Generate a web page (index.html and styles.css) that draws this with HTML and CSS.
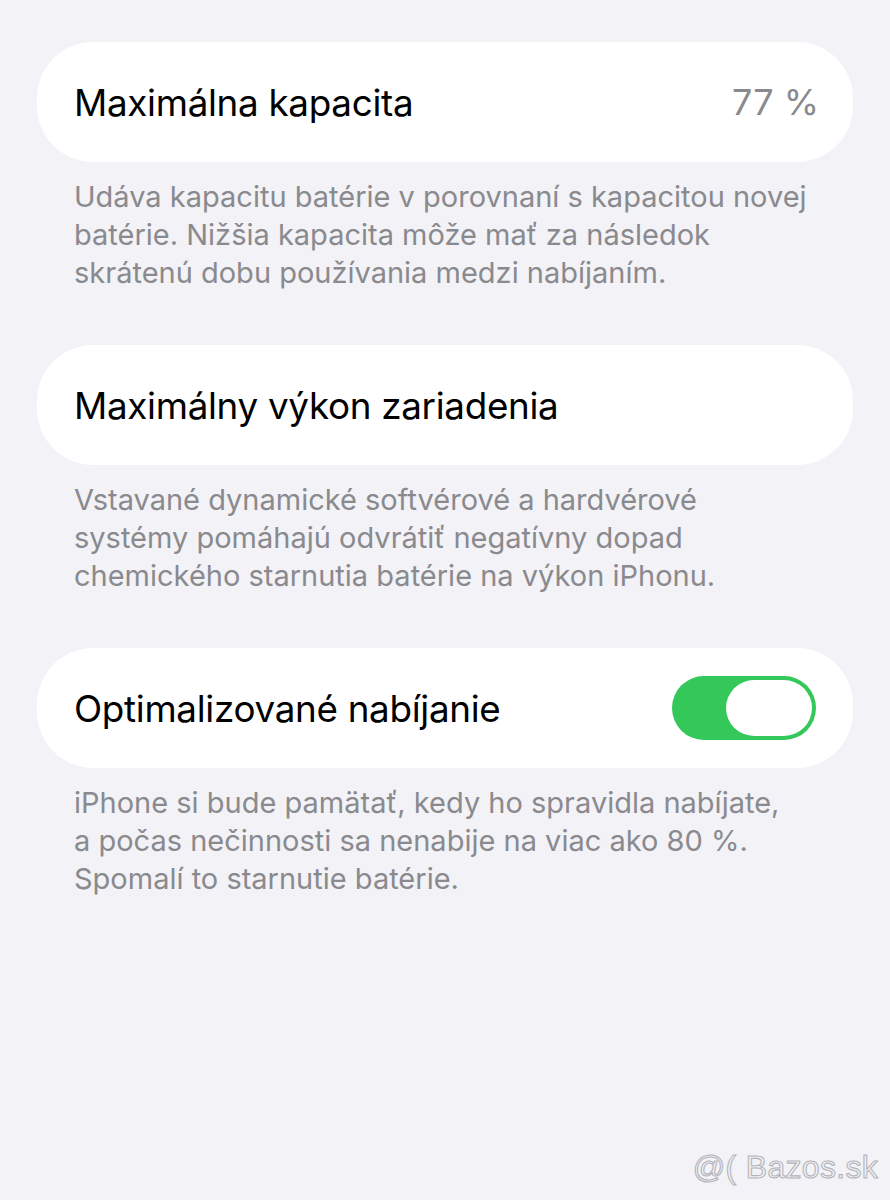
FILE: index.html
```html
<!DOCTYPE html>
<html lang="sk">
<head>
<meta charset="utf-8">
<link rel="stylesheet" href="styles.css">
</head>
<body>
<main class="page">
  <section class="group">
    <div class="card">
      <span class="title">Maximálna kapacita</span>
      <span class="value">77 %</span>
    </div>
    <p class="note">Udáva kapacitu batérie v porovnaní s kapacitou novej<br>batérie. Nižšia kapacita môže mať za následok<br>skrátenú dobu používania medzi nabíjaním.</p>
  </section>
  <section class="group">
    <div class="card">
      <span class="title">Maximálny výkon zariadenia</span>
    </div>
    <p class="note">Vstavané dynamické softvérové a hardvérové<br>systémy pomáhajú odvrátiť negatívny dopad<br>chemického starnutia batérie na výkon iPhonu.</p>
  </section>
  <section class="group">
    <div class="card">
      <span class="title">Optimalizované nabíjanie</span>
      <span class="toggle"><span class="knob"></span></span>
    </div>
    <p class="note">iPhone si bude pamätať, kedy ho spravidla nabíjate,<br>a počas nečinnosti sa nenabije na viac ako 80 %.<br>Spomalí to starnutie batérie.</p>
  </section>
</main>
<div class="watermark">@( Bazos.sk</div>
</body>
</html>
```
FILE: styles.css
```css
html, body {
  margin: 0;
  padding: 0;
  background: #f2f2f7;
  height: 100%;
}
body {
  font-family: Inter, "Noto Sans", sans-serif;
  position: relative;
  overflow: hidden;
}
.page {
  padding: 42px 37px 0 37px;
  display: flex;
  flex-direction: column;
  gap: 53px;
}
.card {
  background: #ffffff;
  height: 120px;
  border-radius: 56px;
  display: flex;
  align-items: center;
  justify-content: space-between;
  padding: 0 37px;
  box-sizing: border-box;
}
.title {
  font-size: 36.8px;
  color: #000;
  letter-spacing: -0.3px;
}
.value {
  font-size: 36px;
  color: #8a8a8e;
  margin-right: -3px;
}
.note {
  margin: 0;
  padding: 16px 37px 0 37px;
  font-size: 29px;
  line-height: 38px;
  color: #8a8a8e;
}
.toggle {
  width: 144px;
  height: 64px;
  border-radius: 32px;
  background: #34c759;
  display: flex;
  align-items: center;
  justify-content: flex-end;
  padding: 0 4px;
  box-sizing: border-box;
}
.knob {
  width: 86px;
  height: 56px;
  border-radius: 28px;
  background: #fff;
}
.watermark {
  position: absolute;
  right: 12px;
  bottom: 14px;
  font-family: "Liberation Sans", Arial, sans-serif;
  font-size: 32px;
  color: transparent;
  -webkit-text-stroke: 1.1px #b4b4b8;
  letter-spacing: 0.3px;
}
```
